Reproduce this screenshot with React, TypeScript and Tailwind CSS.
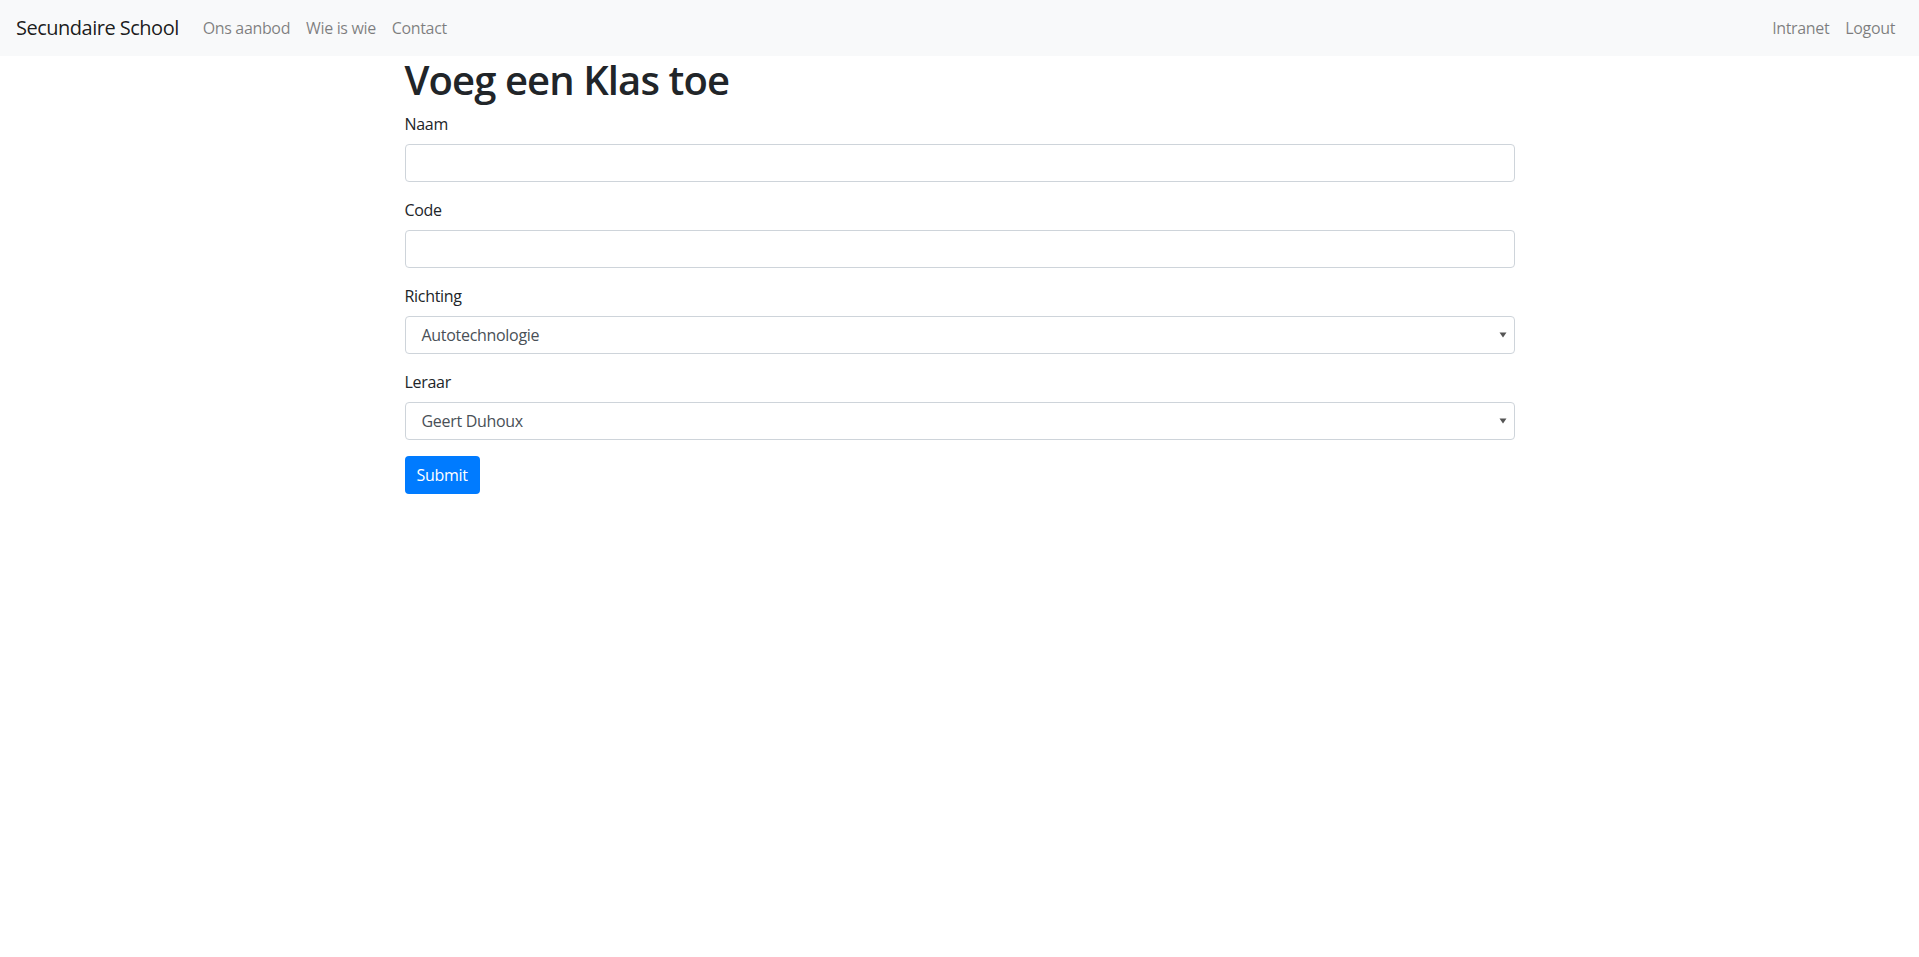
const font = "font-['Segoe_UI','Open_Sans','Noto_Sans',sans-serif]";

function Caret() {
  return (
    <svg width="8" height="6" viewBox="0 0 8 6" className="shrink-0">
      <path d="M0.5 0.5 H7.5 L4 5.5 Z" fill="#555" />
    </svg>
  );
}

function Field({ label, children }: { label: string; children: React.ReactNode }) {
  return (
    <div className="mb-4">
      <label className="mb-2 block text-base leading-6 tracking-[-0.3px] text-[#212529]">{label}</label>
      {children}
    </div>
  );
}

function SelectBox({ value }: { value: string }) {
  return (
    <div className="flex h-[38px] w-full items-center justify-between rounded border border-[#ced4da] bg-white pl-4 pr-[7px] text-base tracking-[-0.3px] text-[#495057]">
      <span>{value}</span>
      <Caret />
    </div>
  );
}

export default function App() {
  const link = "px-2 py-2 text-base leading-6 tracking-[-0.35px] text-black/50";
  return (
    <div className={`${font} min-h-screen bg-white text-[#212529]`}>
      <nav className="flex h-14 items-center justify-between bg-[#f8f9fa] px-4 py-2">
        <div className="flex items-center">
          <a className="mr-4 py-[5px] text-xl leading-[30px] tracking-[-0.5px] text-black/90">Secundaire School</a>
          <a className={link}>Ons aanbod</a>
          <a className={link}>Wie is wie</a>
          <a className={link}>Contact</a>
        </div>
        <div className="flex items-center">
          <a className={link}>Intranet</a>
          <a className={link}>Logout</a>
        </div>
      </nav>

      <main className="mx-auto w-[1140px] px-[15px]">
        <h1 className="mb-2 text-[40px] font-semibold leading-[48px] tracking-[-0.9px]">Voeg een Klas toe</h1>
        <form>
          <Field label="Naam">
            <div className="h-[38px] w-full rounded border border-[#ced4da] bg-white" />
          </Field>
          <Field label="Code">
            <div className="h-[38px] w-full rounded border border-[#ced4da] bg-white" />
          </Field>
          <Field label="Richting">
            <SelectBox value="Autotechnologie" />
          </Field>
          <Field label="Leraar">
            <SelectBox value="Geert Duhoux" />
          </Field>
          <button
            type="button"
            className="h-[38px] rounded bg-[#007bff] px-3 text-base leading-6 tracking-[-0.3px] text-white"
          >
            Submit
          </button>
        </form>
      </main>
    </div>
  );
}
